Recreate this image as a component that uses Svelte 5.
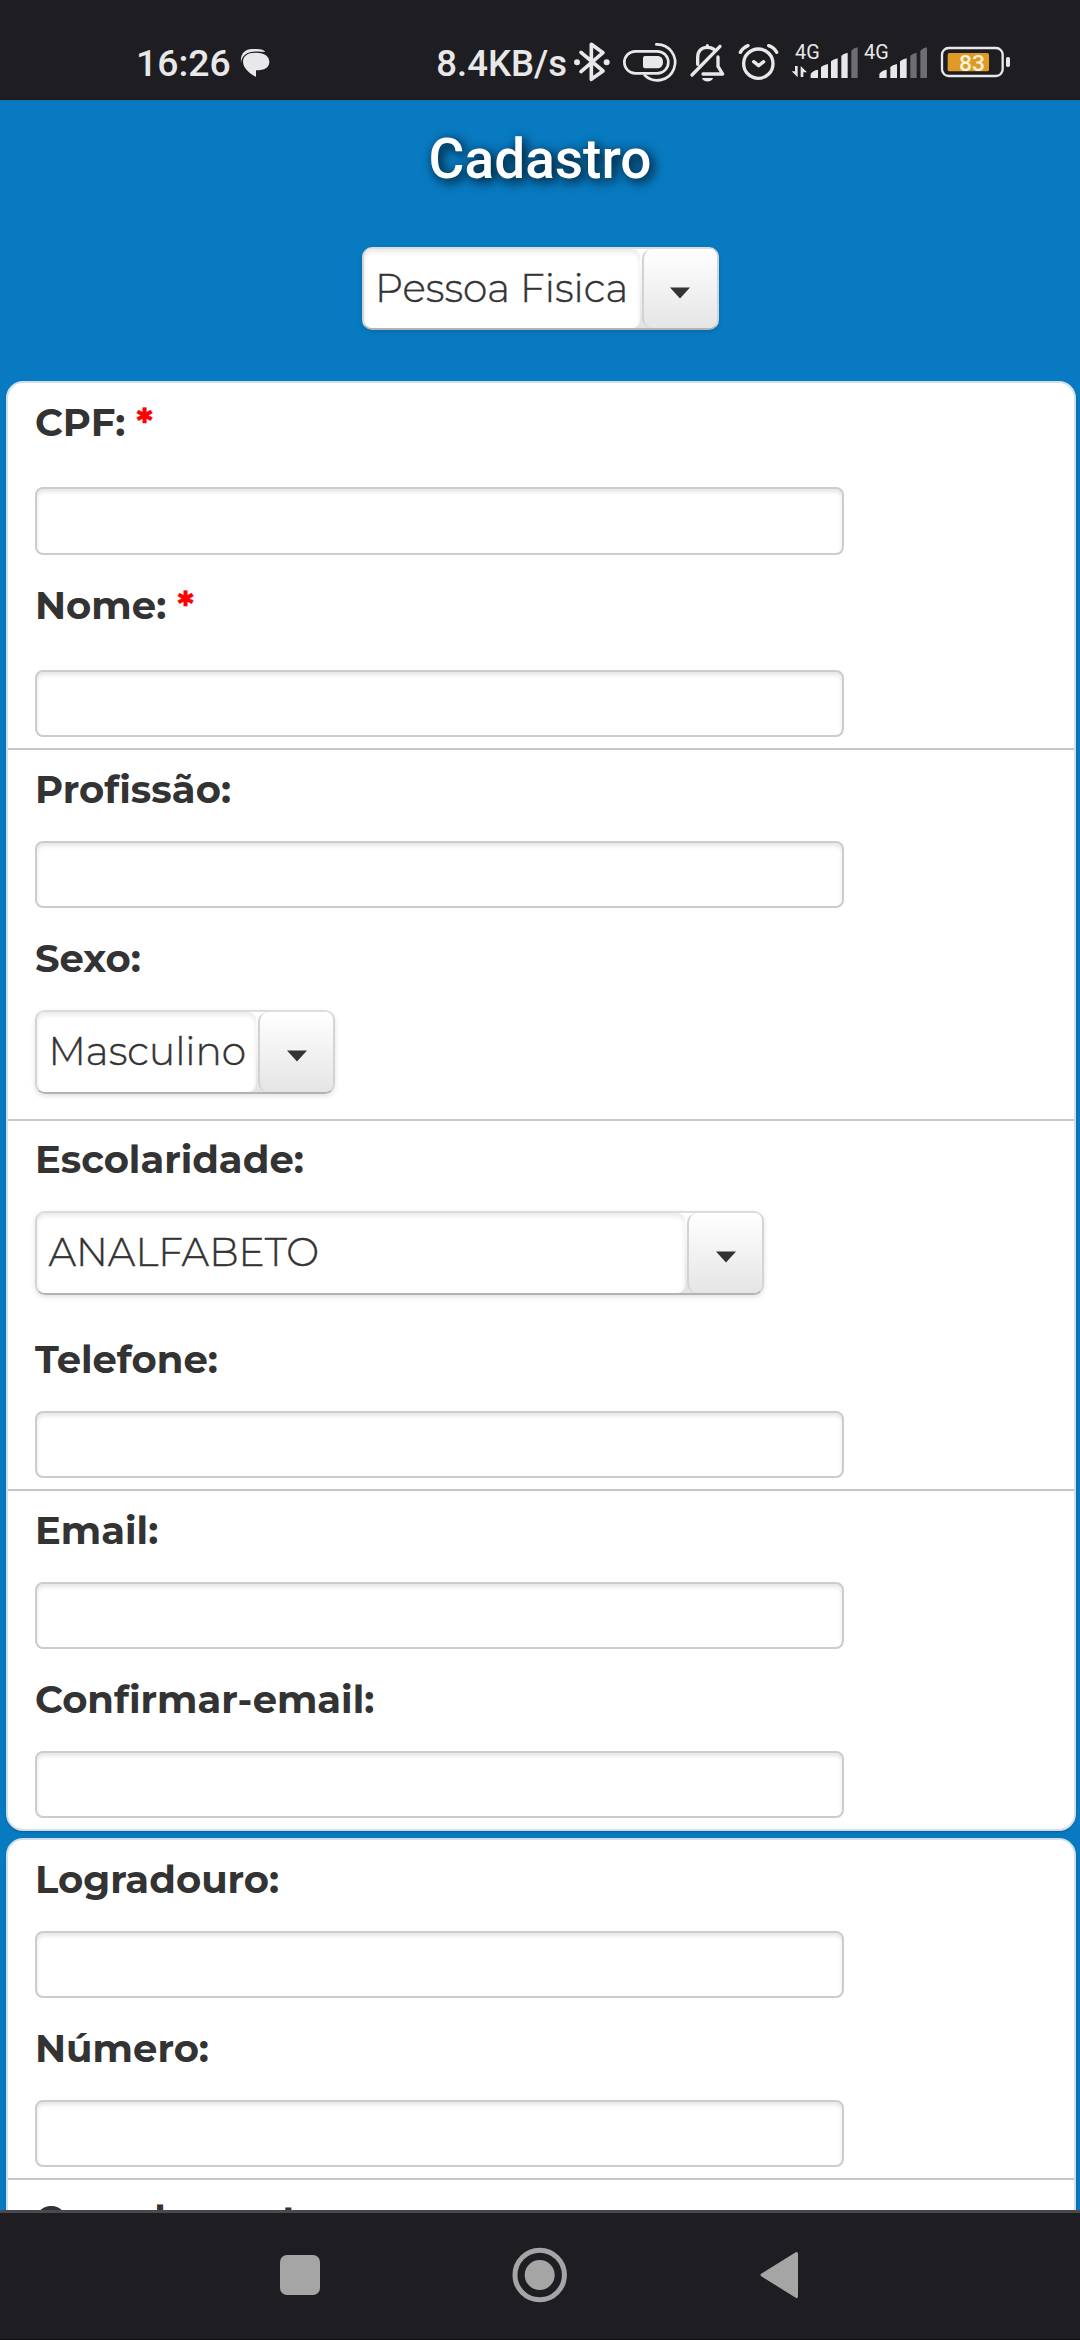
<script lang="ts">
  type Field = {
    label: string;
    kind?: 'select';
    required?: boolean;
    value?: string;
    boxWidth?: number;
  };

  const cards: Field[][][] = [
    [
      [
        { label: 'CPF:', required: true },
        { label: 'Nome:', required: true },
      ],
      [
        { label: 'Profissão:' },
        { label: 'Sexo:', kind: 'select', value: 'Masculino', boxWidth: 300 },
      ],
      [
        { label: 'Escolaridade:', kind: 'select', value: 'ANALFABETO', boxWidth: 729 },
        { label: 'Telefone:' },
      ],
      [{ label: 'Email:' }, { label: 'Confirmar-email:' }],
    ],
    [[{ label: 'Logradouro:' }, { label: 'Número:' }], [{ label: 'Complemento:' }]],
  ];
</script>

{#snippet select(value: string, boxWidth: number)}
  <div class="select" style:width="{boxWidth}px">
    <div class="value">{value}</div>
    <div class="trigger">
      <svg width="20" height="12" viewBox="0 0 20 12"><path d="M0 0.5H20L10 11.5Z" fill="#333" /></svg>
    </div>
  </div>
{/snippet}

<div class="screen">
  <div class="status">
    <svg class="left" width="360" height="90" viewBox="0 0 1080 270" fill="#e8e8e8">
      <text x="108" y="168" font-size="112" font-weight="500" textLength="284" lengthAdjust="spacingAndGlyphs">16:26</text>
      <path d="M423 128C420 101 435 87 456 87H470C484 87 492 90 496 96C474 93 448 93 435 104C427 111 424 119 423 128Z" />
      <path d="M466 98C493 97 508 109 508 125C508 142 494 151 468 151V171C448 160 429 143 429 125C429 108 442 98 466 98Z" />
    </svg>
    <svg class="right" width="620" height="90" viewBox="-420 0 1860 270" fill="#e8e8e8">
      <text x="-371" y="168" font-size="112" font-weight="500" textLength="392" lengthAdjust="spacingAndGlyphs">8.4KB/s</text>
      <g fill="none" stroke="#e8e8e8" stroke-width="10" stroke-linecap="round" stroke-linejoin="round">
        <path d="M63 97L129 153L94 178V73L129 98L63 155" stroke-width="11" />
        <rect x="193" y="94" width="132" height="66" rx="33" stroke-width="8" />
        <path d="M289 73A54 54 0 1 1 254 166" stroke-width="8" />
        <path d="M396 165L480 79M413 133V113C413 92 425 82 442 82C450 82 457 84 462 88M442 77V82M474 111V139L488 162H429" />
        <circle cx="595" cy="131" r="44" />
        <path d="M581 125L596 137L611 125M541 97Q549 83 564 77M626 77Q643 83 650 97" />
      </g>
      <circle cx="51" cy="127" r="9" />
      <circle cx="140" cy="127" r="9" />
      <path d="M255 108H292C303 108 309 115 309 126S303 145 292 145H255Q249 145 249 139V114Q249 108 255 108Z" />
      <path d="M426 174H459C457 188 428 188 426 174Z" />
      <text x="705" y="116" font-size="59" textLength="74" lengthAdjust="spacingAndGlyphs">4G</text>
      <text x="912" y="116" font-size="59" textLength="74" lengthAdjust="spacingAndGlyphs">4G</text>
      <path d="M705 138H713V172L695 154H705ZM722 138L741 157H730V171H722Z" />
      <path d="M752 174V162Q758 151 774 149V174ZM783 174V141Q790 135 804 132V174ZM813 174V124Q820 118 833 115V174ZM844 174V107Q850 101 863 98V174Z" />
      <path d="M958 174V162Q964 151 980 149V174ZM991 174V141Q997 135 1011 132V174ZM1020 174V124Q1027 118 1040 115V174Z" />
      <path
        fill="#6e6d71"
        d="M874 174V92Q880 85 893 82V174ZM1051 174V107Q1057 101 1070 98V174ZM1081 174V92Q1087 85 1101 82V174Z"
      />
      <rect x="1146" y="84" width="182" height="84" rx="20" fill="none" stroke="#e8e8e8" stroke-width="7" />
      <rect x="1163" y="99" width="124" height="55" rx="5" fill="#e09a25" />
      <rect x="1338" y="111" width="12" height="30" rx="5" />
      <text x="1197" y="152" font-size="68" font-weight="500" fill="#fbf3dc" textLength="78" lengthAdjust="spacingAndGlyphs">83</text>
    </svg>
  </div>

  <main>
    <header>
      <h1>Cadastro</h1>
      {@render select('Pessoa Fisica', 357)}
    </header>

    {#each cards as sections}
      <section class="card">
        {#each sections as fields}
          <div class="group" class:snug={fields[0].kind === 'select'}>
            {#each fields as field}
              <div class="field" class:required={field.required}>
                <div class="label">
                  {field.label}
                  {#if field.required}<span class="star">*</span>{/if}
                </div>
                {#if field.kind === 'select'}
                  {@render select(field.value ?? '', field.boxWidth ?? 0)}
                {:else}
                  <input type="text" aria-label={field.label} />
                {/if}
              </div>
            {/each}
          </div>
        {/each}
      </section>
    {/each}
  </main>

  <nav>
    <svg width="1080" height="124" viewBox="0 2213 1080 124" fill="#a5a5a5">
      <rect x="280" y="2255" width="40" height="40" rx="7" />
      <circle cx="539.7" cy="2275" r="24.7" fill="none" stroke="#a5a5a5" stroke-width="5" />
      <circle cx="539.7" cy="2275" r="15" />
      <path d="M762 2275L796.500 2253.500V2296.500Z" stroke="#a5a5a5" stroke-width="3" stroke-linejoin="round" />
    </svg>
  </nav>
</div>

<style>
  :global(body) {
    margin: 0;
    background: #087ac1;
  }

  .screen {
    display: flex;
    flex-direction: column;
    width: 1080px;
    height: 2340px;
    overflow: hidden;
    box-sizing: border-box;
  }

  svg {
    display: block;
    flex: none;
  }

  .status {
    flex: none;
    display: flex;
    justify-content: space-between;
    height: 80px;
    padding: 20px 40px 0 100px;
    background: #1e1d22;
    font-family: Roboto, sans-serif;
    overflow: hidden;
  }

  .status .right {
    margin-left: -40px;
  }

  main {
    flex: 1;
    min-height: 0;
    overflow: hidden;
    background: #087ac1;
  }

  header {
    display: flex;
    flex-direction: column;
    align-items: center;
    height: 280px;
    border-top: 1px solid #176fa8;
  }

  h1 {
    margin: 26px 0 56px;
    color: #fff;
    font: 500 55px/64px Roboto, sans-serif;
    text-shadow: 3px 3px 12px #000;
  }

  .card {
    margin: 0 4px 7px 6px;
    border: 2px solid #d0e0ec;
    border-radius: 17px;
    background: #fff;
    box-shadow: 0 1px 2px rgba(0, 0, 0, 0.25);
  }

  .group {
    padding: 25px 27px 11px;
  }

  .group + .group {
    border-top: 2px solid #c0c7cd;
  }

  .group.snug {
    padding-top: 24px;
  }

  .field {
    display: flex;
    flex-direction: column;
    align-items: flex-start;
    gap: 26px;
  }

  .field + .field {
    margin-top: 36px;
  }

  .field.required {
    gap: 39px;
  }

  .field.required:first-child input {
    height: 68px;
  }

  .field .select {
    margin-bottom: 14px;
  }

  .label {
    height: 40px;
    color: #333;
    font: 700 38.5px/30px Montserrat, Inter, sans-serif;
    white-space: nowrap;
  }

  .star {
    color: #f00;
    -webkit-text-stroke: 0.4px #f00;
  }

  input {
    width: 809px;
    height: 67px;
    margin: 0;
    padding: 0 12px;
    box-sizing: border-box;
    border: 2px solid #ccc;
    border-radius: 8px;
    background: #fff;
    box-shadow: inset 0 3px 4px rgba(0, 0, 0, 0.1);
    outline: none;
  }

  .select {
    display: flex;
    flex: none;
    height: 84px;
    box-sizing: border-box;
    border: 2px solid;
    border-color: #dcdcdc #d4d4d4 #b3b3b3;
    border-radius: 10px;
    background: linear-gradient(#fff, #e3e3e3);
    box-shadow: 0 2px 5px rgba(0, 0, 0, 0.12);
  }

  .value {
    flex: 1;
    margin-right: 2px;
    padding-left: 11.5px;
    border-radius: 8px;
    background: #fff;
    box-shadow: inset 0 3px 5px rgba(0, 0, 0, 0.09);
    color: #333;
    font: 300 39.1px/78px Montserrat, Inter, sans-serif;
    -webkit-text-stroke: 0.4px #333;
    white-space: nowrap;
  }

  .trigger {
    display: flex;
    justify-content: center;
    width: 73px;
    padding-top: 38px;
    box-sizing: content-box;
    border-left: 2px solid #d2d2d2;
    border-radius: 10px 8px 8px 10px;
    background: linear-gradient(#fff, #e5e5e5);
    height: 42px;
  }

  header .select {
    height: 83px;
  }

  header .trigger {
    height: 41px;
  }

  nav {
    flex: none;
    height: 126px;
    border-top: 3px solid #4a4850;
    border-bottom: 1px solid #0c0c0f;
    background: #1e1d22;
  }
</style>
